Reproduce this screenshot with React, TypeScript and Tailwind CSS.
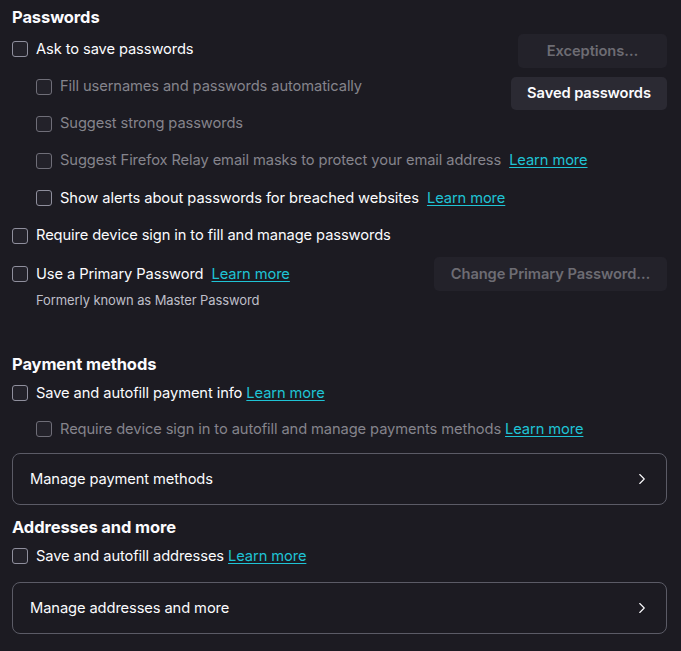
import { ChevronRight } from "lucide-react";

function Box({ disabled }: { disabled?: boolean }) {
  return (
    <span
      className={
        "inline-block size-4 shrink-0 rounded-[3px] border bg-[#23222a] " +
        (disabled ? "border-[#6f6e78]" : "border-[#8f8f9d]")
      }
    />
  );
}

function Link({ gap }: { gap?: boolean }) {
  return (
    <a className={"text-[#1fc3d5] underline underline-offset-2 " + (gap ? "ml-2" : "ml-1")}>
      Learn more
    </a>
  );
}

function Row({
  label,
  nested,
  disabled,
  link,
  gap,
  h,
}: {
  label: string;
  nested?: boolean;
  disabled?: boolean;
  link?: boolean;
  gap?: boolean;
  h: string;
}) {
  return (
    <div className={"flex items-center whitespace-nowrap " + h + (nested ? " pl-6" : "")}>
      <Box disabled={disabled} />
      <span className={"ml-2 " + (disabled ? "text-[#85848c]" : "text-[#fbfbfe]")}>{label}</span>
      {link && <Link gap={gap} />}
    </div>
  );
}

function NavBox({ label, mt }: { label: string; mt: string }) {
  return (
    <div
      className={
        "flex h-[52px] items-center justify-between rounded-lg border border-[#5b5b66] pl-[17px] pr-[15px] text-[#fbfbfe] " +
        mt
      }
    >
      <span>{label}</span>
      <ChevronRight className="size-[18px] text-[#fbfbfe]" strokeWidth={1.5} />
    </div>
  );
}

export default function App() {
  return (
    <div
      className="min-h-[651px] bg-[#1c1b22] pl-3 pr-[14px] pt-px text-[14.7px] tracking-[-0.1px] text-[#fbfbfe]"
      style={{ fontFamily: "Inter, 'Noto Sans', sans-serif" }}
    >
      <h2 className="flex h-8 items-center text-[16.5px] font-bold">Passwords</h2>
      <div className="flex">
        <div className="min-w-0 flex-1">
          <Row label="Ask to save passwords" h="h-8" />
          <div className="pt-[3px]">
            <Row label="Fill usernames and passwords automatically" nested disabled h="h-[37px]" />
            <Row label="Suggest strong passwords" nested disabled h="h-[37px]" />
            <Row
              label="Suggest Firefox Relay email masks to protect your email address"
              nested
              disabled
              link
              gap
              h="h-[37px]"
            />
            <Row label="Show alerts about passwords for breached websites" nested link gap h="h-[38px]" />
          </div>
        </div>
        <div className="flex flex-col items-end gap-[9px] pt-px">
          <button className="h-[34px] w-[149px] rounded-[5px] bg-[#23222a] font-semibold text-[#6d6c73]">
            Exceptions…
          </button>
          <button className="h-[33px] w-[156px] rounded-[5px] bg-[#2b2a33] font-semibold text-[#fbfbfe]">
            Saved passwords
          </button>
        </div>
      </div>
      <Row label="Require device sign in to fill and manage passwords" h="h-[37px]" />
      <div className="flex h-10 items-center justify-between">
        <div className="flex items-center">
          <Box />
          <span className="ml-2">Use a Primary Password</span>
          <Link gap />
        </div>
        <button className="h-[34px] w-[233px] rounded-[5px] bg-[#23222a] font-semibold text-[#6d6c73]">
          Change Primary Password…
        </button>
      </div>
      <p className="flex h-[14px] items-center pl-6 text-[13px] text-[#bfbfc9]">Formerly known as Master Password</p>

      <h2 className="mt-10 flex h-8 items-center text-[16.5px] font-bold">Payment methods</h2>
      <Row label="Save and autofill payment info" link h="h-[26px]" />
      <div className="mt-[5px]">
        <Row
          label="Require device sign in to autofill and manage payments methods"
          nested
          disabled
          link
          h="h-9"
        />
      </div>
      <NavBox label="Manage payment methods" mt="mt-[6px]" />

      <h2 className="mt-[6px] flex h-8 items-center text-[16.5px] font-bold">Addresses and more</h2>
      <Row label="Save and autofill addresses" link h="h-[26px]" />
      <NavBox label="Manage addresses and more" mt="mt-[13px]" />
    </div>
  );
}
